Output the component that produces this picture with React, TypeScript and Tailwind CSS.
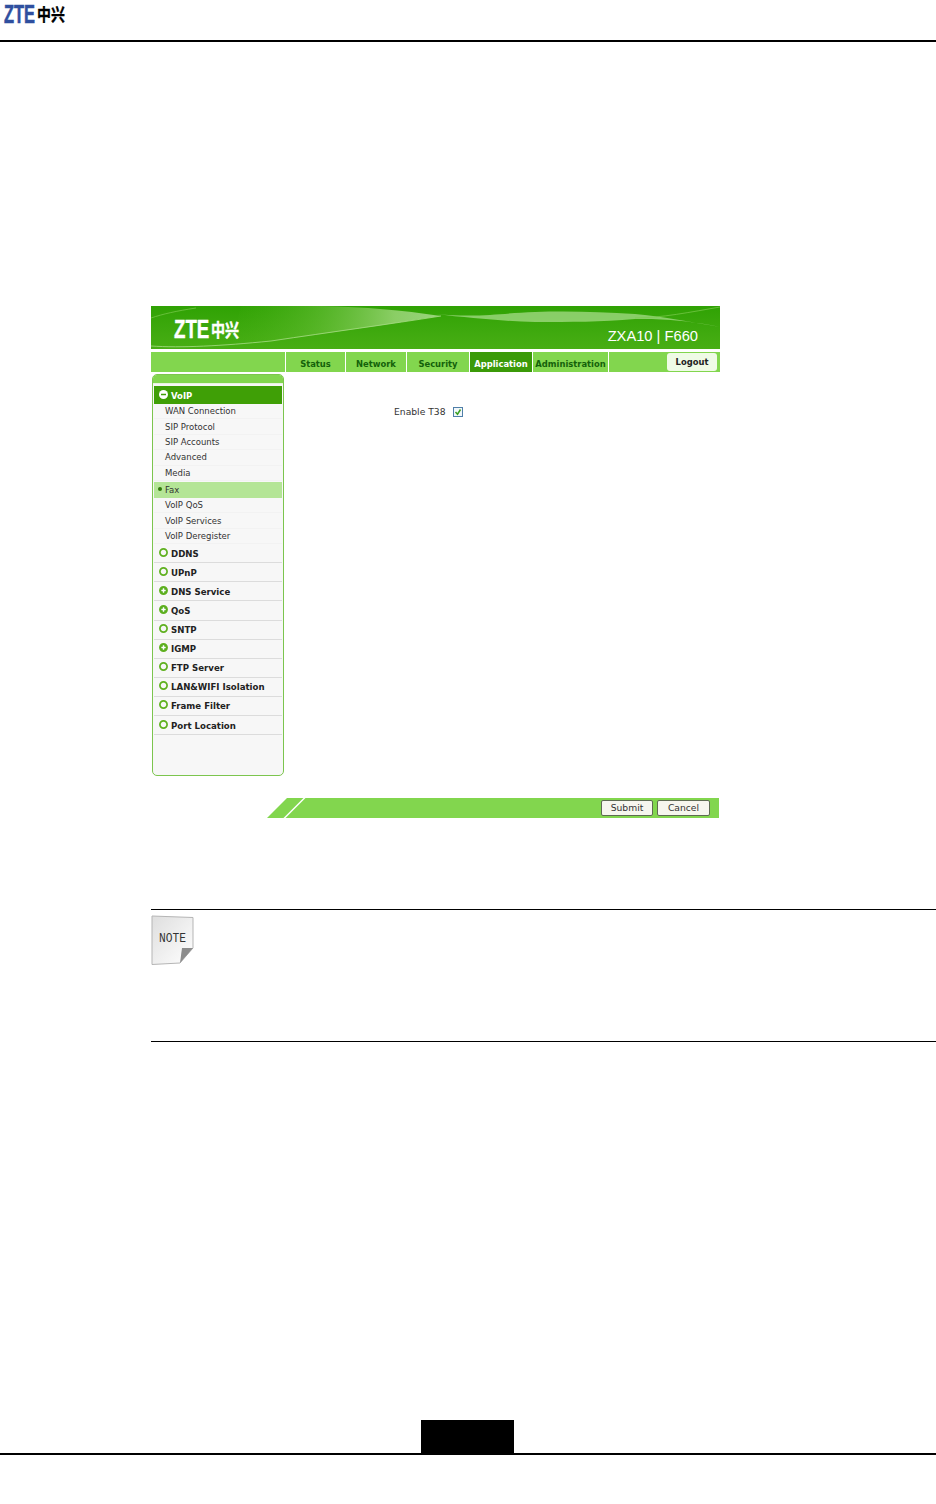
const tabs = [
  { label: "Status", w: "w-[59px]" },
  { label: "Network", w: "w-[60px]" },
  { label: "Security", w: "w-[62px]" },
  { label: "Application", w: "w-[62px]", active: true },
  { label: "Administration", w: "w-[75px]" },
];

const subItems = ["WAN Connection", "SIP Protocol", "SIP Accounts", "Advanced", "Media"];
const subItems2 = ["VoIP QoS", "VoIP Services", "VoIP Deregister"];
const groups = [
  { label: "DDNS" },
  { label: "UPnP" },
  { label: "DNS Service", plus: true },
  { label: "QoS", plus: true },
  { label: "SNTP" },
  { label: "IGMP", plus: true },
  { label: "FTP Server" },
  { label: "LAN&WIFI Isolation" },
  { label: "Frame Filter" },
  { label: "Port Location" },
];

function Bullet({ plus }: { plus?: boolean }) {
  return (
    <svg width="9" height="9" viewBox="0 0 9 9" className="shrink-0">
      <circle cx="4.5" cy="4.5" r="3.6" fill={plus ? "#4fa81a" : "#f7f7f7"} stroke="#5fb01f" strokeWidth="1.7" />
      {plus && <path d="M2.3 4.5h4.4M4.5 2.3v4.4" stroke="#fff" strokeWidth="1.5" />}
    </svg>
  );
}

function SubItem({ label }: { label: string }) {
  return (
    <div className="h-[15.4px] flex items-center pl-[11px] pt-[1px] text-[8.5px] text-[#333] border-b border-[#f2f2f2]">
      {label}
    </div>
  );
}

function Banner() {
  return (
    <div className="relative h-[43px] overflow-hidden bg-gradient-to-b from-[#2fa204] to-[#48ae14]">
      <svg className="absolute inset-0" width="569" height="43" viewBox="0 0 569 43">
        <defs>
          <linearGradient id="sheen" x1="0" y1="0" x2="1" y2="0">
            <stop offset="0" stopColor="#4fb31a" stopOpacity="0" />
            <stop offset="0.4" stopColor="#6cc03c" stopOpacity="0.5" />
            <stop offset="0.78" stopColor="#8fd06a" stopOpacity="0.95" />
            <stop offset="1" stopColor="#a4d98a" stopOpacity="0.9" />
          </linearGradient>
        </defs>
        <path d="M90 0H170C215 1 250 4 290 10C250 16 200 24 150 31C120 35 100 37 80 39Z" fill="url(#sheen)" />
        <path d="M0 40C30 42 70 40 120 35C180 26 240 18 290 10" stroke="#a8dc86" strokeWidth="1" fill="none" opacity="0.8" />
        <path d="M0 12C12 8 25 5 45 2" stroke="#7ccb4f" strokeWidth="1" fill="none" opacity="0.7" />
        <path d="M284 8C330 12 350 7 384 6C420 5 450 6 484 8C510 10 540 16 569 21C530 13 505 13 484 13C450 16 420 16 384 16C350 15 320 12 284 8Z" fill="#a6dc88" opacity="0.75" />
        <path d="M484 12C510 12 540 6 569 1" stroke="#7ccb4f" strokeWidth="1" fill="none" opacity="0.7" />
      </svg>
      <div className="absolute left-[23px] top-[10px] flex items-center font-bold text-white [-webkit-text-stroke:0.4px_#fff]">
        <div className="w-[37px] h-[26px]">
          <span className="block origin-left scale-x-[0.72] w-[51px] text-[26px] leading-[26px] font-['Liberation_Sans',sans-serif]">ZTE</span>
        </div>
        <div className="w-[29px] h-[26px]">
          <span className="block origin-left scale-x-[0.78] w-[37px] text-[18px] leading-[26px] font-['Noto_Sans_CJK_SC',sans-serif]">中兴</span>
        </div>
      </div>
      <div className="absolute right-[22px] top-[22px] text-[14.7px] leading-[17px] text-white font-['Liberation_Sans',sans-serif]">
        ZXA10 | F660
      </div>
    </div>
  );
}

function NavBar() {
  return (
    <div className="mt-[3px] h-[20px] flex gap-px font-['DejaVu_Sans',sans-serif] font-bold text-[8.4px]">
      <div className="w-[134px] bg-[#82d64e]" />
      {tabs.map((t) => (
        <div
          key={t.label}
          className={`${t.w} flex items-center justify-center pt-[4px] ${
            t.active ? "bg-[#3b9a08] text-white" : "bg-[#82d64e] text-[#14610a]"
          }`}
        >
          {t.label}
        </div>
      ))}
      <div className="flex-1 bg-[#82d64e] flex items-center justify-end pr-[3px]">
        <div className="w-[50px] h-[18px] rounded-[3px] bg-[#effbe6] flex items-center justify-center text-[#222]">
          Logout
        </div>
      </div>
    </div>
  );
}

function Sidebar() {
  return (
    <div className="ml-px mt-[2px] w-[132px] h-[402px] rounded-[5px] border border-[#7cc54e] bg-[#f7f7f7] overflow-hidden font-['DejaVu_Sans',sans-serif]">
      <div className="h-[9px] bg-[#82d64e] border-b border-[#e8f5de]" />
      <div className="px-[1px] pt-[2px]">
        <div className="h-[18px] bg-[#3f9f06] flex items-center gap-[3px] pl-[5px] text-[8.5px] font-bold text-white">
          <svg width="9" height="9" viewBox="0 0 9 9" className="shrink-0 -mt-[2px]">
            <circle cx="4.5" cy="4.5" r="4.5" fill="#fff" />
            <path d="M2 4.5h5" stroke="#3f9f06" strokeWidth="1.6" />
          </svg>
          <span className="pt-[2px]">VoIP</span>
        </div>
        {subItems.map((s) => (
          <SubItem key={s} label={s} />
        ))}
        <div className="mt-px h-[16px] bg-[#b4e596] flex items-center pl-[4px] text-[8.5px] text-[#333]">
          <span className="w-[4px] h-[4px] rounded-full bg-[#2f7a08] mr-[3px] -mt-[1px]" />
          <span className="pt-[1px]">Fax</span>
        </div>
        {subItems2.map((s) => (
          <SubItem key={s} label={s} />
        ))}
        {groups.map((g) => (
          <div
            key={g.label}
            className="h-[19.1px] flex items-center gap-[3px] pl-[5px] pt-[1px] text-[8.6px] font-bold text-[#222] border-b border-[#dcdcdc]"
          >
            <span className="-mt-[3px]">
              <Bullet plus={g.plus} />
            </span>
            <span className="pt-[1px]">{g.label}</span>
          </div>
        ))}
      </div>
    </div>
  );
}

function Figure() {
  return (
    <div className="w-[569px]">
      <Banner />
      <NavBar />
      <div className="flex">
        <Sidebar />
        <div className="pl-[110px] pt-[34px] flex items-start gap-[7px] font-['DejaVu_Sans',sans-serif] text-[9.2px] text-[#333]">
          <span className="leading-[12px]">Enable T38</span>
          <span className="mt-[1px] w-[10px] h-[10px] border border-[#4f7fa8] bg-[#f1f7fb] flex items-center justify-center">
            <svg width="8" height="8" viewBox="0 0 8 8">
              <path d="M1.5 4l2 2.2L6.5 1.5" stroke="#3aa020" strokeWidth="1.5" fill="none" />
            </svg>
          </span>
        </div>
      </div>
      <div className="mt-[22px] ml-[116px] h-[20px] flex font-['DejaVu_Sans',sans-serif] text-[9.2px] text-[#333]">
        <svg width="40" height="20" viewBox="0 0 40 20" className="shrink-0">
          <path d="M0 20L20 0H40V20Z" fill="#82d64e" />
          <path d="M16.5 20L36.5 0H38.5L18.5 20Z" fill="#fff" />
        </svg>
        <div className="flex-1 mr-px bg-[#82d64e] flex items-center justify-end gap-[4px] pr-[9px]">
          <div className="w-[52px] h-[16px] rounded-[2px] border border-[#5e6b52] bg-[#f6f6ee] flex items-center justify-center">Submit</div>
          <div className="w-[53px] h-[16px] rounded-[2px] border border-[#5e6b52] bg-[#f6f6ee] flex items-center justify-center">Cancel</div>
        </div>
      </div>
    </div>
  );
}

function NoteIcon() {
  return (
    <svg width="44" height="50" viewBox="0 0 44 50">
      <defs>
        <linearGradient id="paper" x1="0" y1="0" x2="1" y2="1">
          <stop offset="0" stopColor="#dedede" />
          <stop offset="1" stopColor="#ffffff" />
        </linearGradient>
      </defs>
      <path d="M1 1L42 2.5V33L29 48L1 49.5Z" fill="url(#paper)" stroke="#b5b5b5" />
      <path d="M29 48L31 33H42Z" fill="#8c8c8c" />
      <text x="8" y="27" fontFamily="Liberation Mono, monospace" fontSize="12" fill="#333" textLength="27" lengthAdjust="spacingAndGlyphs">NOTE</text>
    </svg>
  );
}

export default function App() {
  return (
    <div className="w-[936px] h-[1504px] bg-white overflow-hidden">
      <header className="relative h-[42px] border-b-2 border-black">
        <div className="absolute left-[4px] top-0 flex items-center font-bold">
          <div className="w-[33px] h-[29px]">
            <span className="block origin-left scale-x-[0.655] w-[48px] text-[25px] leading-[29px] text-[#2f4f9f] [-webkit-text-stroke:0.6px_#2f4f9f] font-['Liberation_Sans',sans-serif]">ZTE</span>
          </div>
          <div className="w-[28px] h-[29px]">
            <span className="block origin-left scale-x-[0.82] w-[34px] text-[17px] leading-[27px] text-black [-webkit-text-stroke:0.3px_#000] font-['Noto_Sans_CJK_SC',sans-serif]">中兴</span>
          </div>
        </div>
      </header>
      <div className="pl-[151px] pt-[264px]">
        <Figure />
        <div className="mt-[91px] h-[133px] border-y border-black pt-[5px]">
          <NoteIcon />
        </div>
      </div>
      <div className="mt-[378px] h-[35px] border-b-2 border-black flex justify-center">
        <div className="ml-[-1px] w-[93px] h-[33px] bg-black" />
      </div>
    </div>
  );
}
